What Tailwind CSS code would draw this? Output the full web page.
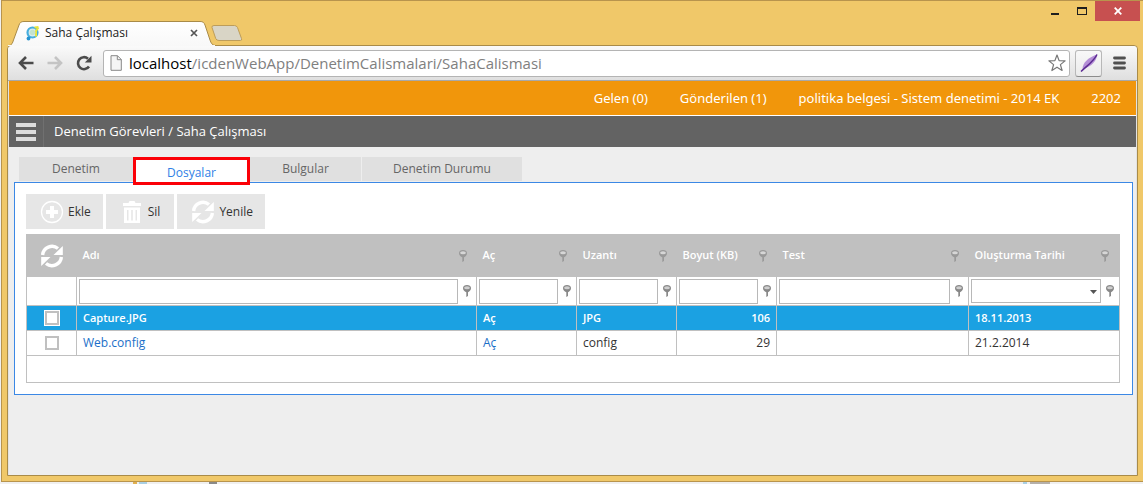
<!DOCTYPE html>
<html lang="tr">
<head>
<meta charset="utf-8">
<title>Saha Çalışması</title>
<script src="https://cdn.jsdelivr.net/npm/@tailwindcss/browser@4"></script>
</head>
<body class="flex min-h-screen flex-col bg-[#f0f0f0] font-['Open_Sans','Noto_Sans',sans-serif] text-xs text-[#333]">
<svg class="hidden">
  <symbol id="pin" viewBox="0 0 8 12">
    <path d="M0 3C0 1 1.800 0 4 0s4 1 4 3c0 2-1.300 3.500-3 4.200V11L3.300 12V7.200C1.300 6.500 0 5 0 3z" fill="currentColor"/>
    <ellipse cx="4" cy="2.700" rx="2.900" ry="1.500" fill="#fff" fill-opacity=".6"/>
  </symbol>
  <symbol id="refresh" viewBox="0 0 24 24">
    <path d="M2.600 11A9.500 9.500 0 0 1 18 4.500" fill="none" stroke="currentColor" stroke-width="3.400"/>
    <path d="M22.800 2v9h-9.300z" fill="currentColor"/>
    <path d="M21.400 13A9.500 9.500 0 0 1 6 19.500" fill="none" stroke="currentColor" stroke-width="3.400"/>
    <path d="M1.200 22v-9h9.300z" fill="currentColor"/>
  </symbol>
</svg>

<div class="ml-px flex flex-1 flex-col border-y border-l border-[#b8944d] bg-[#f0c869] pr-[5px] pl-[5px]">
  <!-- title bar -->
  <header class="flex h-11 items-start justify-between">
    <div class="flex items-end self-end">
      <div class="relative h-6 w-[204px]">
        <svg class="absolute left-0 top-0 h-[25px] w-[208px]" viewBox="0 0 208 25" aria-hidden="true">
          <defs><linearGradient id="tabfill" x1="0" y1="0" x2="0" y2="1"><stop offset="0" stop-color="#fff"/><stop offset="1" stop-color="#f8f8f8"/></linearGradient></defs>
          <path d="M2 24.500C5 24 5.500 22 6.500 19L12 4C13 1.500 14 .5 17 .5h176c3 0 4 1 5 3.500l5 15c1 3 2 5 5 5.500z" fill="url(#tabfill)" stroke="#a98b48"/>
          <path d="M1 24.500h207" stroke="#f8f8f8"/>
        </svg>
        <div class="relative flex h-6 items-center gap-1 pr-[13px] pl-[18px]">
          <svg class="size-4" viewBox="0 0 16 16" aria-hidden="true">
            <circle cx="7.500" cy="7.500" r="5" fill="#d8edf0" stroke="#46aede" stroke-width="2.200"/>
            <path d="M9.500 2.500l4-.5M13.500 2.500L11 6v5.500" fill="none" stroke="#e9e53a" stroke-width="2"/>
            <circle cx="7.500" cy="7.500" r="2.800" fill="#c3e3cf"/>
            <circle cx="3.500" cy="13.500" r="1.900" fill="#2593d1"/>
          </svg>
          <span class="flex-1 text-xs text-[#222]">Saha Çalışması</span>
          <button class="size-2" aria-label="Sekmeyi kapat"><svg viewBox="0 0 8 8" class="size-2"><path d="M1 1l6 6M7 1L1 7" stroke="#555" stroke-width="1.700"/></svg></button>
        </div>
      </div>
      <button class="mb-1 h-4 w-8" aria-label="Yeni sekme"><svg class="h-4 w-8" viewBox="0 0 32 16"><path d="M1 2.500Q.5.500 3 .5h20.500q2 0 3 2l4 11q.7 2-1 2H8q-2.500 0-3.300-2z" fill="#d9d5c6" stroke="#bd9d5a"/></svg></button>
    </div>
    <div class="flex h-5 items-center">
      <button class="grid h-5 w-[27px] place-items-center" aria-label="Simge durumuna küçült"><svg class="h-3 w-2" viewBox="0 0 8 12"><path d="M0 8h8v2H0z" fill="#1e1e1e"/></svg></button>
      <button class="grid h-5 w-[27px] place-items-center" aria-label="Ekranı kapla"><svg class="h-2 w-2.5" viewBox="0 0 10 8"><path d="M0 0h10v8H0zM1 2v5h8V2z" fill="#1e1e1e" fill-rule="evenodd"/></svg></button>
      <button class="-mr-0.5 grid h-5 w-[45px] place-items-center bg-[#c75050]" aria-label="Kapat"><svg class="size-2" viewBox="0 0 8 8"><path d="M.7.7l6.600 6.600M7.300.7L.7 7.300" stroke="#fff" stroke-width="1.800"/></svg></button>
    </div>
  </header>

  <div class="mb-[5px] flex flex-1 flex-col rounded-t border border-[#a98b48] bg-[#eee]">
    <!-- browser toolbar -->
    <div class="flex h-[35px] items-center gap-[5px] rounded-t border-b border-[#a8a8a8] bg-linear-to-b from-[#fafafa] to-[#dfdfdf] pr-[11px] pl-2.5">
      <div class="flex w-20 items-center gap-[13px]">
        <button aria-label="Geri"><svg class="size-4" viewBox="0 0 16 16"><path d="M15.500 8H3M8 2L2 8l6 6" fill="none" stroke="#4b4b4b" stroke-width="2.600"/></svg></button>
        <button aria-label="İleri"><svg class="size-4" viewBox="0 0 16 16"><path d="M.5 8H13M8 2l6 6-6 6" fill="none" stroke="#c4c4c4" stroke-width="2.600"/></svg></button>
        <button aria-label="Yeniden yükle"><svg class="size-4" viewBox="0 0 16 16"><path d="M13 11.500A6 6 0 1 1 12 3.700" fill="none" stroke="#4b4b4b" stroke-width="2.600"/><path d="M15.500.8v6.700H8.800z" fill="#4b4b4b"/></svg></button>
      </div>
      <div class="flex h-[27px] flex-1 items-center rounded-[3px] border border-[#b4b4b4] bg-white pr-[3px] pl-1.5">
        <svg class="mr-1 h-4 w-3" viewBox="0 0 12 16" aria-hidden="true"><path d="M1 .7h6.500L11.300 4.500v10.800H1z" fill="#f5f5f5" stroke="#888"/><path d="M7.300.7v4h4" fill="none" stroke="#888"/></svg>
        <a href="#" class="flex-1 pl-[3px] text-[15px] leading-6 text-[#808080]"><span class="text-black">localhost</span>/icdenWebApp/DenetimCalismalari/SahaCalismasi</a>
        <button aria-label="Yer işareti ekle"><svg class="size-[18px]" viewBox="0 0 18 18"><path d="M9 1l2.100 5.600 6 .3-4.700 3.700 1.700 5.900L9 13.200l-5.100 3.300 1.700-5.900L.9 6.900l6-.3z" fill="#fff" stroke="#777" stroke-width="1.200" stroke-linejoin="round"/></svg></button>
      </div>
      <button class="grid size-[27px] place-items-center rounded-[3px] border border-[#b8b8b8] border-b-[#8c8c8c] bg-linear-to-b from-[#f8f8f8] to-[#ebebeb]" aria-label="Uzantı">
        <svg class="size-[18px]" viewBox="0 0 18 18"><path d="M2.500 15C2.500 9 8 3.500 17 .5 17 6.500 12 12.500 2.500 15z" fill="#b48fd6"/><path d="M17 .5C14 7 9 10 1 17.500" fill="none" stroke="#5b2a91" stroke-width="1.500"/></svg>
      </button>
      <button class="ml-1.5" aria-label="Menü"><svg class="h-3.5 w-[13px]" viewBox="0 0 13 14"><path d="M1.500 2h10M1.500 7h10M1.500 12h10" stroke="#505050" stroke-width="2.800" stroke-linecap="round"/></svg></button>
    </div>

    <!-- page -->
    <div class="flex-1 border-x border-[#e2e2e2]">
    <nav class="flex h-[35px] items-center justify-end gap-8 border-b border-white bg-[#f1960b] pt-0.5 pr-[15px] font-['Noto_Sans','Open_Sans',sans-serif] text-[13px] text-white">
      <a href="#">Gelen (0)</a><a href="#">Gönderilen (1)</a><a href="#">politika belgesi - Sistem denetimi - 2014 EK</a><a href="#">2202</a>
    </nav>
    <div class="flex h-[31px] items-center bg-[#636363] text-[13px] text-white">
      <button class="grid h-[31px] w-[35px] place-items-center border-r border-[#707070]" aria-label="Gezinti menüsü"><svg class="h-[18px] w-5" viewBox="0 0 20 18"><path d="M0 0h20v4H0zM0 7h20v4H0zM0 14h20v4H0z" fill="#ddd"/></svg></button>
      <h1 class="pl-2.5">Denetim Görevleri / Saha Çalışması</h1>
    </div>

    <main class="pt-2.5 pr-[3px] pl-[5px]">
      <div class="flex h-[25px] items-start pl-[5px] text-[#666]" role="tablist">
        <button role="tab" class="h-6 w-[114px] bg-[#e0e0e0]">Denetim</button>
        <button role="tab" aria-selected="true" class="relative h-7 w-[117px] border-[3px] border-[#fb0007] bg-white pt-1 text-[#2f7fe6]">Dosyalar</button>
        <button role="tab" class="h-6 w-[111px] bg-[#e0e0e0]">Bulgular</button>
        <button role="tab" class="ml-px h-6 w-40 bg-[#e0e0e0]">Denetim Durumu</button>
      </div>
      <section class="border border-[#3b88e5] bg-white py-[11px] pr-3 pl-[11px]">
        <div class="mb-[5px] flex gap-[3px]">
          <button class="flex h-[35px] items-center gap-1 bg-[#e6e6e6] pr-3 pl-3.5"><svg class="size-6" viewBox="0 0 24 24"><circle cx="12" cy="12" r="10.500" fill="none" stroke="#fff" stroke-width="1.300"/><path d="M10 6h4v4h4v4h-4v4h-4v-4H6v-4h4z" fill="#fff"/></svg>Ekle</button>
          <button class="flex h-[35px] items-center gap-1 bg-[#e6e6e6] pr-3.5 pl-3.5"><svg class="size-6" viewBox="0 0 24 24"><path d="M3 3h5.500l1-2h5l1 2H21v3H3zM4 7.500h16V23H4zM7 10v10.500h1.500V10zM11.200 10v10.500h1.600V10zM15.500 10v10.500H17V10z" fill="#fff" fill-rule="evenodd"/></svg>Sil</button>
          <button class="flex h-[35px] items-center gap-1 bg-[#e6e6e6] pr-3 pl-3.5"><svg class="size-6 text-white"><use href="#refresh"/></svg>Yenile</button>
        </div>
        <table class="w-full table-fixed border-collapse border border-[#c0c0c0] text-left">
          <colgroup><col class="w-[50px]"><col><col class="w-[100px]"><col class="w-[100px]"><col class="w-[100px]"><col class="w-[192px]"><col class="w-[151px]"></colgroup>
          <thead>
            <tr class="h-[42px] bg-[#c0c0c0] text-[11px] text-white">
              <th><button class="mx-auto block" aria-label="Yenile"><svg class="size-6"><use href="#refresh"/></svg></button></th>
              <th class="pr-2.5 pl-1.5 font-semibold"><div class="flex items-center justify-between">Adı<svg class="h-3 w-2 text-[#999]"><use href="#pin"/></svg></div></th>
              <th class="pr-2.5 pl-1.5 font-semibold"><div class="flex items-center justify-between">Aç<svg class="h-3 w-2 text-[#999]"><use href="#pin"/></svg></div></th>
              <th class="pr-2.5 pl-1.5 font-semibold"><div class="flex items-center justify-between">Uzantı<svg class="h-3 w-2 text-[#999]"><use href="#pin"/></svg></div></th>
              <th class="pr-2.5 pl-1.5 font-semibold"><div class="flex items-center justify-between whitespace-nowrap">Boyut (KB)<svg class="h-3 w-2 text-[#999]"><use href="#pin"/></svg></div></th>
              <th class="pr-2.5 pl-1.5 font-semibold"><div class="flex items-center justify-between">Test<svg class="h-3 w-2 text-[#999]"><use href="#pin"/></svg></div></th>
              <th class="pr-2.5 pl-1.5 font-semibold"><div class="flex items-center justify-between whitespace-nowrap">Oluşturma Tarihi<svg class="h-3 w-2 text-[#999]"><use href="#pin"/></svg></div></th>
            </tr>
            <tr class="h-[29px]">
              <td class="border border-[#c0c0c0]"></td>
              <td class="border border-[#c0c0c0] pr-[5px] pl-0.5"><div class="flex items-center gap-[5px]"><input aria-label="Adı filtresi" class="h-[25px] w-0 flex-1 border border-[#b8b8b8] px-1"><svg class="h-3 w-2 text-[#888]"><use href="#pin"/></svg></div></td>
              <td class="border border-[#c0c0c0] pr-[5px] pl-0.5"><div class="flex items-center gap-[5px]"><input aria-label="Aç filtresi" class="h-[25px] w-0 flex-1 border border-[#b8b8b8] px-1"><svg class="h-3 w-2 text-[#888]"><use href="#pin"/></svg></div></td>
              <td class="border border-[#c0c0c0] pr-[5px] pl-0.5"><div class="flex items-center gap-[5px]"><input aria-label="Uzantı filtresi" class="h-[25px] w-0 flex-1 border border-[#b8b8b8] px-1"><svg class="h-3 w-2 text-[#888]"><use href="#pin"/></svg></div></td>
              <td class="border border-[#c0c0c0] pr-[5px] pl-0.5"><div class="flex items-center gap-[5px]"><input aria-label="Boyut filtresi" class="h-[25px] w-0 flex-1 border border-[#b8b8b8] px-1"><svg class="h-3 w-2 text-[#888]"><use href="#pin"/></svg></div></td>
              <td class="border border-[#c0c0c0] pr-[5px] pl-0.5"><div class="flex items-center gap-[5px]"><input aria-label="Test filtresi" class="h-[25px] w-0 flex-1 border border-[#b8b8b8] px-1"><svg class="h-3 w-2 text-[#888]"><use href="#pin"/></svg></div></td>
              <td class="border border-[#c0c0c0] pr-[5px] pl-0.5"><div class="flex items-center gap-[5px]"><div class="relative flex flex-1"><select aria-label="Oluşturma tarihi filtresi" class="h-6 w-full appearance-none border border-[#b8b8b8] bg-white px-1"><option></option></select><svg class="pointer-events-none absolute top-[11px] right-1 h-1 w-[7px]" viewBox="0 0 7 4"><path d="M0 0h7L3.500 4z" fill="#555"/></svg></div><svg class="h-3 w-2 text-[#888]"><use href="#pin"/></svg></div></td>
            </tr>
          </thead>
          <tbody>
            <tr class="h-[25px] bg-[#1ba1e2] text-[11px] font-semibold text-white">
              <td class="border border-[#c0c0c0]"><input type="checkbox" aria-label="Capture.JPG seç" class="mx-auto block size-3.5 appearance-none border-2 border-[#c0c0c0] bg-white outline outline-white"></td>
              <td class="border border-[#c0c0c0] px-1.5"><a href="#">Capture.JPG</a></td>
              <td class="border border-[#c0c0c0] px-1.5"><a href="#">Aç</a></td>
              <td class="border border-[#c0c0c0] px-1.5">JPG</td>
              <td class="border border-[#c0c0c0] px-1.5 text-right">106</td>
              <td class="border border-[#c0c0c0]"></td>
              <td class="border border-[#c0c0c0] px-1.5">18.11.2013</td>
            </tr>
            <tr class="h-[25px]">
              <td class="border border-[#c0c0c0]"><input type="checkbox" aria-label="Web.config seç" class="mx-auto block size-3.5 appearance-none border-2 border-[#c0c0c0] bg-white"></td>
              <td class="border border-[#c0c0c0] px-1.5 text-[#1b6fc8]"><a href="#">Web.config</a></td>
              <td class="border border-[#c0c0c0] px-1.5 text-[#1b6fc8]"><a href="#">Aç</a></td>
              <td class="border border-[#c0c0c0] px-1.5">config</td>
              <td class="border border-[#c0c0c0] px-1.5 text-right">29</td>
              <td class="border border-[#c0c0c0]"></td>
              <td class="border border-[#c0c0c0] px-1.5">21.2.2014</td>
            </tr>
            <tr class="h-[27px]"><td colspan="7" class="border border-[#c0c0c0]"></td></tr>
          </tbody>
        </table>
      </section>
    </main>
    </div>
  </div>
</div>
<!-- sliver of the window behind -->
<div class="flex h-0.5 justify-between pr-[93px] pl-[133px]" aria-hidden="true">
  <div class="flex gap-[2px]"><i class="h-0.5 w-1 bg-[#e0b050]"></i><i class="h-0.5 w-2 bg-[#a9cfe4]"></i><i class="ml-[60px] h-0.5 w-2 bg-[#8a8a8a]"></i></div>
  <div class="flex gap-[3px]"><i class="h-0.5 w-1 bg-[#a9cfe4]"></i><i class="h-0.5 w-5 bg-[#b5b0ab]"></i></div>
</div>
</body>
</html>
